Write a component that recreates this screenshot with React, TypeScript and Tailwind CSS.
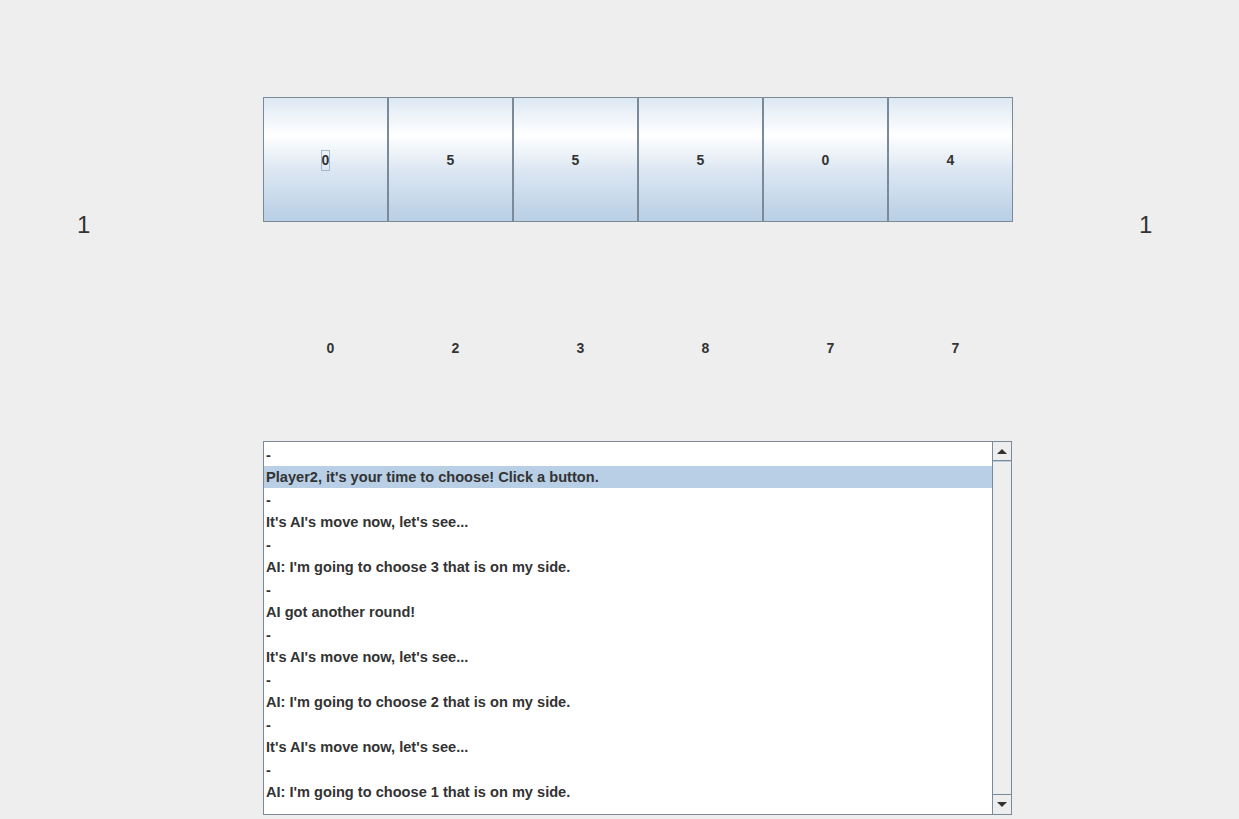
const top = [0, 5, 5, 5, 0, 4];
const bottom = [0, 2, 3, 8, 7, 7];

const lines = [
  "-",
  "Player2, it's your time to choose! Click a button.",
  "-",
  "It's AI's move now, let's see...",
  "-",
  "AI: I'm going to choose 3 that is on my side.",
  "-",
  "AI got another round!",
  "-",
  "It's AI's move now, let's see...",
  "-",
  "AI: I'm going to choose 2 that is on my side.",
  "-",
  "It's AI's move now, let's see...",
  "-",
  "AI: I'm going to choose 1 that is on my side.",
];

const Pit = ({ n, focused }: { n: number; focused?: boolean }) => (
  <button className="w-[125px] h-full flex items-center justify-center pt-[2px] border border-[#7a8a99] bg-[linear-gradient(to_bottom,#dde8f3_0%,#ffffff_30%,#dbe6f2_60%,#b8cfe5_100%)]">
    <span
      className={
        "px-px leading-[21px] text-[14px] font-bold text-[#333333] " +
        (focused ? "outline outline-1 -outline-offset-1 outline-[#a3b8cc]" : "")
      }
    >
      {n}
    </span>
  </button>
);

export default function App() {
  return (
    <div
      className="w-[1239px] h-[819px] bg-[#eeeeee] flex text-[#333333] overflow-hidden"
      style={{ fontFamily: '"Liberation Sans", Arial, sans-serif' }}
    >
      {/* left store */}
      <div className="w-[263px] pt-[212px] pl-[77px] text-[24px] leading-[26px]">1</div>

      {/* board */}
      <div className="w-[750px] flex flex-col pt-[97px]">
        <div className="flex h-[125px]">
          {top.map((n, i) => (
            <Pit key={i} n={n} focused={i === 0} />
          ))}
        </div>
        <div className="flex mt-[118px] h-[16px]">
          {bottom.map((n, i) => (
            <div key={i} className="w-[125px] pl-[10px] text-center text-[14px] leading-[16px] font-bold">
              {n}
            </div>
          ))}
        </div>

        {/* log list */}
        <div className="mt-[85px] w-[749px] h-[374px] border border-[#7a8a99] bg-white flex">
          <div className="flex-1 pt-[1px]">
            {lines.map((l, i) => (
              <div
                key={i}
                className={
                  "h-[22.5px] flex items-center pt-[3px] pl-[2px] text-[14.6px] font-bold whitespace-nowrap " +
                  (i === 1 ? "bg-[#b8cfe5]" : "")
                }
              >
                {l}
              </div>
            ))}
          </div>
          <div className="w-[19px] border-l border-[#7a8a99] bg-[#eeeeee] flex flex-col">
            <div className="h-[19px] border-b border-[#7a8a99] flex items-center justify-center">
              <div className="w-0 h-0 border-l-[5px] border-r-[5px] border-b-[5px] border-l-transparent border-r-transparent border-b-[#333333]" />
            </div>
            <div className="flex-1 border-t border-[#b8cfe5]" />
            <div className="h-[20px] border-t border-[#7a8a99] flex items-center justify-center">
              <div className="w-0 h-0 border-l-[5px] border-r-[5px] border-t-[5px] border-l-transparent border-r-transparent border-t-[#333333]" />
            </div>
          </div>
        </div>
      </div>

      {/* right store */}
      <div className="flex-1 pt-[212px] pl-[126px] text-[24px] leading-[26px]">1</div>
    </div>
  );
}
